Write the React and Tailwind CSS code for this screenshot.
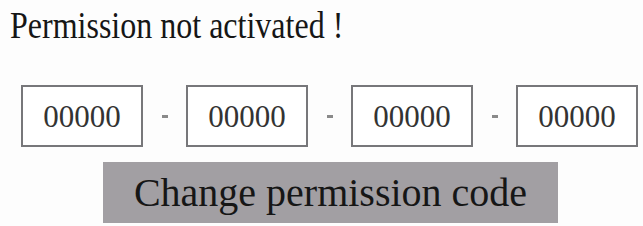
import React from 'react';

const CodeBox = ({ value }) => (
  <div className="w-[122px] h-[62px] border-2 border-[#77777a] flex items-center justify-center bg-white">
    <span className="font-['Liberation_Serif'] text-[31px] leading-none text-[#333333]">{value}</span>
  </div>
);

const Dash = () => (
  <div className="w-[43px] flex items-center justify-center">
    <div className="w-[6px] h-[3px] bg-[#8a8a8a]" />
  </div>
);

export default function App() {
  const codes = ['00000', '00000', '00000', '00000'];

  return (
    <div className="w-[643px] h-[226px] bg-[#fdfdfd] overflow-hidden">
      <div className="pl-[10px] pt-[7px] h-[85px]">
        <h1 className="font-['Liberation_Serif'] text-[37px] leading-[37px] text-[#161616] origin-left scale-x-[0.865] whitespace-nowrap">
          Permission not activated !
        </h1>
      </div>
      <div className="flex pl-[21px]">
        {codes.map((c, i) => (
          <React.Fragment key={i}>
            {i > 0 && <Dash />}
            <CodeBox value={c} />
          </React.Fragment>
        ))}
      </div>
      <div className="pl-[103px] pt-[15px]">
        <button className="w-[455px] h-[61px] bg-[#a29fa3] flex items-center justify-center">
          <span className="font-['Liberation_Serif'] text-[40px] leading-none text-[#161616]">Change permission code</span>
        </button>
      </div>
    </div>
  );
}
